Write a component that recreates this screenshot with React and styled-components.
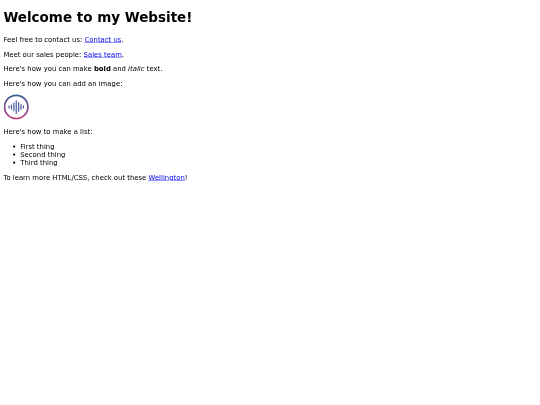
import React from "react";
import styled, { createGlobalStyle } from "styled-components";

const GlobalStyle = createGlobalStyle`
  html, body {
    margin: 0;
    padding: 0;
    background: #fff;
  }
`;

const Frame = styled.div`
  height: 405px;
  overflow: hidden;
`;

// the page is laid out at 1280 wide and shrunk to the 540 window
const Page = styled.main`
  display: flow-root;
  width: 1280px;
  box-sizing: border-box;
  padding: 0 8px;
  font-family: "DejaVu Sans", sans-serif;
  font-size: 16.27px;
  line-height: 18.6px;
  color: #000;
  transform: scale(0.421875);
  transform-origin: 0 0;
  filter: blur(0.4px);
`;

const Title = styled.h1`
  font-size: 32px;
  line-height: 37px;
  font-weight: 700;
  margin: 24px 0;
`;

const Text = styled.p`
  margin: 16.5px 0;
`;

const TextLink = styled.a`
  color: #0000ee;
  text-decoration: underline;
`;

const Logo = styled.svg`
  display: block;
  width: 61px;
  height: 61px;
  margin: -2px 0 18.5px;
`;

const List = styled.ul`
  margin: 18px 0;
  padding-left: 40px;
`;

const SoundLogo = () => (
  <Logo viewBox="0 0 54 54" fill="none">
    <defs>
      <linearGradient id="ring" x1="0" y1="0" x2="0" y2="1">
        <stop offset="0" stopColor="#3a5f96" />
        <stop offset="1" stopColor="#b8407f" />
      </linearGradient>
    </defs>
    <circle cx="27" cy="27" r="24.5" stroke="url(#ring)" strokeWidth="3.6" />
    <g stroke="#4a5a9c" strokeWidth="2.6" strokeLinecap="round">
      <path d="M12 25v4M17 23v8M22 19v16M27 14v26M32 18v18M37 22v10M42 25v4" />
    </g>
  </Logo>
);

const App = () => (
  <Frame>
    <GlobalStyle />
    <Page>
      <Title>Welcome to my Website!</Title>
      <Text>
        Feel free to contact us: <TextLink href="#contact">Contact us</TextLink>.
      </Text>
      <Text>
        Meet our sales people: <TextLink href="#sales">Sales team</TextLink>.
      </Text>
      <Text>
        Here's how you can make <b>bold</b> and <i>italic</i> text.
      </Text>
      <Text>Here's how you can add an image:</Text>
      <SoundLogo />
      <Text>Here's how to make a list:</Text>
      <List>
        <li>First thing</li>
        <li>Second thing</li>
        <li>Third thing</li>
      </List>
      <Text>
        To learn more HTML/CSS, check out these{" "}
        <TextLink href="#wellington">Wellington</TextLink>!
      </Text>
    </Page>
  </Frame>
);

export default App;
